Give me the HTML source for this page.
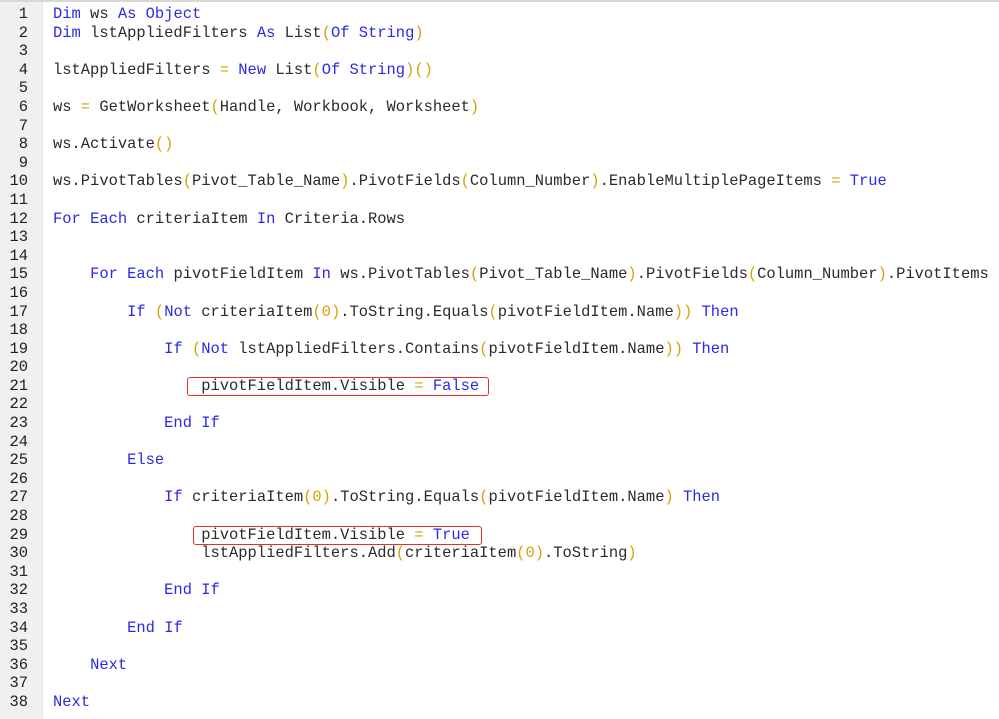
<!DOCTYPE html>
<html><head><meta charset="utf-8"><style>
html,body{margin:0;padding:0;background:#fff;width:999px;height:719px;overflow:hidden}
.g{position:absolute;left:0;top:0;width:42px;height:719px;background:#f0f0f0;border-right:1px solid #e4e4e4}
.top{position:absolute;left:0;top:0;width:999px;height:2px;background:#d8d8d8}
.code{position:absolute;left:0;top:5px;font-family:"Liberation Mono","Courier New",monospace;font-size:15.45px;color:#2a2a2a}
.code div{height:18.6px;line-height:18.6px;white-space:pre}
.ln{display:inline-block;width:28px;text-align:right;margin-right:25px;color:#222}
.k{color:#2a2ae6}.p{color:#d4a300}
.box{position:absolute;border:1.3px solid #e03030;border-radius:3px}
</style></head><body>
<div class="g"></div><div class="top"></div>
<div class="code">
<div><span class="ln">1</span><span class="k">Dim</span> ws <span class="k">As</span> <span class="k">Object</span></div>
<div><span class="ln">2</span><span class="k">Dim</span> lstAppliedFilters <span class="k">As</span> List<span class="p">(</span><span class="k">Of</span> <span class="k">String</span><span class="p">)</span></div>
<div><span class="ln">3</span></div>
<div><span class="ln">4</span>lstAppliedFilters <span class="p">=</span> <span class="k">New</span> List<span class="p">(</span><span class="k">Of</span> <span class="k">String</span><span class="p">)()</span></div>
<div><span class="ln">5</span></div>
<div><span class="ln">6</span>ws <span class="p">=</span> GetWorksheet<span class="p">(</span>Handle, Workbook, Worksheet<span class="p">)</span></div>
<div><span class="ln">7</span></div>
<div><span class="ln">8</span>ws.Activate<span class="p">()</span></div>
<div><span class="ln">9</span></div>
<div><span class="ln">10</span>ws.PivotTables<span class="p">(</span>Pivot_Table_Name<span class="p">)</span>.PivotFields<span class="p">(</span>Column_Number<span class="p">)</span>.EnableMultiplePageItems <span class="p">=</span> <span class="k">True</span></div>
<div><span class="ln">11</span></div>
<div><span class="ln">12</span><span class="k">For</span> <span class="k">Each</span> criteriaItem <span class="k">In</span> Criteria.Rows</div>
<div><span class="ln">13</span></div>
<div><span class="ln">14</span></div>
<div><span class="ln">15</span>    <span class="k">For</span> <span class="k">Each</span> pivotFieldItem <span class="k">In</span> ws.PivotTables<span class="p">(</span>Pivot_Table_Name<span class="p">)</span>.PivotFields<span class="p">(</span>Column_Number<span class="p">)</span>.PivotItems</div>
<div><span class="ln">16</span></div>
<div><span class="ln">17</span>        <span class="k">If</span> <span class="p">(</span><span class="k">Not</span> criteriaItem<span class="p">(0)</span>.ToString.Equals<span class="p">(</span>pivotFieldItem.Name<span class="p">))</span> <span class="k">Then</span></div>
<div><span class="ln">18</span></div>
<div><span class="ln">19</span>            <span class="k">If</span> <span class="p">(</span><span class="k">Not</span> lstAppliedFilters.Contains<span class="p">(</span>pivotFieldItem.Name<span class="p">))</span> <span class="k">Then</span></div>
<div><span class="ln">20</span></div>
<div><span class="ln">21</span>                pivotFieldItem.Visible <span class="p">=</span> <span class="k">False</span></div>
<div><span class="ln">22</span></div>
<div><span class="ln">23</span>            <span class="k">End</span> <span class="k">If</span></div>
<div><span class="ln">24</span></div>
<div><span class="ln">25</span>        <span class="k">Else</span></div>
<div><span class="ln">26</span></div>
<div><span class="ln">27</span>            <span class="k">If</span> criteriaItem<span class="p">(0)</span>.ToString.Equals<span class="p">(</span>pivotFieldItem.Name<span class="p">)</span> <span class="k">Then</span></div>
<div><span class="ln">28</span></div>
<div><span class="ln">29</span>                pivotFieldItem.Visible <span class="p">=</span> <span class="k">True</span></div>
<div><span class="ln">30</span>                lstAppliedFilters.Add<span class="p">(</span>criteriaItem<span class="p">(0)</span>.ToString<span class="p">)</span></div>
<div><span class="ln">31</span></div>
<div><span class="ln">32</span>            <span class="k">End</span> <span class="k">If</span></div>
<div><span class="ln">33</span></div>
<div><span class="ln">34</span>        <span class="k">End</span> <span class="k">If</span></div>
<div><span class="ln">35</span></div>
<div><span class="ln">36</span>    <span class="k">Next</span></div>
<div><span class="ln">37</span></div>
<div><span class="ln">38</span><span class="k">Next</span></div>
</div>
<div class="box" style="left:187px;top:377px;width:300px;height:17px"></div>
<div class="box" style="left:193px;top:526px;width:287px;height:17px"></div>
</body></html>
